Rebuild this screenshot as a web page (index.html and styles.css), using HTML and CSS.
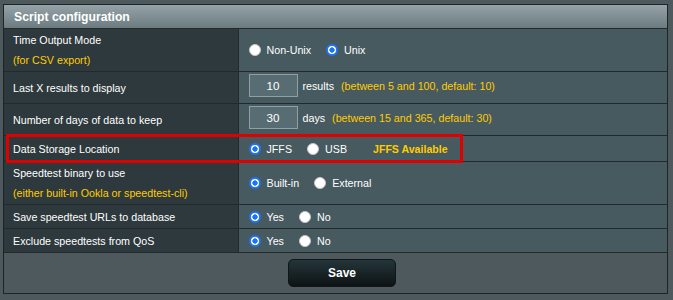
FILE: index.html
```html
<!DOCTYPE html>
<html>
<head>
<meta charset="utf-8">
<link rel="stylesheet" href="styles.css">
</head>
<body>
<div class="panel">
  <table class="form">
    <colgroup><col class="c1"><col></colgroup>
    <thead>
      <tr class="head"><td colspan="2">Script configuration</td></tr>
    </thead>
    <tbody>
      <tr class="two">
        <th>Time Output Mode<br><span class="hint">(for CSV export)</span></th>
        <td><div class="opts">
          <input type="radio" class="radio" name="t"><span class="lbl">Non-Unix</span>
          <input type="radio" class="radio" name="t" checked><span class="lbl">Unix</span>
        </div></td>
      </tr>
      <tr class="inp">
        <th>Last X results to display</th>
        <td><div class="opts">
          <input type="text" class="num" value="10"><span>results</span><span class="hint gap">(between 5 and 100, default: 10)</span>
        </div></td>
      </tr>
      <tr class="inp">
        <th>Number of days of data to keep</th>
        <td><div class="opts">
          <input type="text" class="num" value="30"><span>days</span><span class="hint gap">(between 15 and 365, default: 30)</span>
        </div></td>
      </tr>
      <tr class="one storage">
        <th>Data Storage Location</th>
        <td><div class="opts">
          <input type="radio" class="radio" name="s" checked><span class="lbl">JFFS</span>
          <input type="radio" class="radio" name="s"><span class="lbl">USB</span>
          <span class="hint bold avail">JFFS Available</span>
        </div></td>
      </tr>
      <tr class="two">
        <th>Speedtest binary to use<br><span class="hint">(either built-in Ookla or speedtest-cli)</span></th>
        <td><div class="opts">
          <input type="radio" class="radio" name="b" checked><span class="lbl">Built-in</span>
          <input type="radio" class="radio" name="b"><span class="lbl">External</span>
        </div></td>
      </tr>
      <tr class="one">
        <th>Save speedtest URLs to database</th>
        <td><div class="opts">
          <input type="radio" class="radio" name="u" checked><span class="lbl">Yes</span>
          <input type="radio" class="radio" name="u"><span class="lbl">No</span>
        </div></td>
      </tr>
      <tr class="one">
        <th>Exclude speedtests from QoS</th>
        <td><div class="opts">
          <input type="radio" class="radio" name="q" checked><span class="lbl">Yes</span>
          <input type="radio" class="radio" name="q"><span class="lbl">No</span>
        </div></td>
      </tr>
    </tbody>
  </table>
  <div class="apply"><button class="save">Save</button></div>
  <div class="mark"></div>
</div>
</body>
</html>
```
FILE: styles.css
```css
body {
  margin: 0;
  background: #4d595d;
  font-family: "Liberation Sans", Arial, sans-serif;
  color: #fff;
}
.panel {
  position: relative;
  margin: 4px 5px 5px 3px;
  border: 1px solid #1c2426;
  background: #4d595d;
}
.form {
  width: 100%;
  border-collapse: collapse;
  border-style: hidden;
  table-layout: fixed;
}
.form col.c1 { width: 234px; }
.form th, .form td {
  border: 1px solid #222a2c;
}
.form th {
  background: #2e393d;
  font-weight: normal;
  text-align: left;
  font-size: 10.7px;
  line-height: 20px;
  padding: 1px 9px 1px;
  color: #fff;
}
.form td {
  background: #475a5f;
  font-size: 10.7px;
  padding: 1px 10px;
}
.form .head td {
  background: linear-gradient(#95a3a8, #6c7b80);
  font-weight: bold;
  font-size: 12.2px;
  line-height: 16px;
  padding: 4px 10px 3px;
  color: #fff;
}
.form tr.one th { padding: 2px 9px 1px; }
.form tr.storage th { padding: 3px 9px 2px; }
.form tr.inp td { padding: 2px 10px 6px; }
.opts {
  display: flex;
  align-items: center;
  min-height: 20px;
  white-space: nowrap;
}
.hint { color: #ffcc00; }
.bold { font-weight: bold; font-size: 10.6px; }
.gap { margin-left: 7px; }
.avail { margin-left: 11px; }
.radio {
  appearance: none;
  -webkit-appearance: none;
  width: 12px;
  height: 12px;
  margin: 0;
  border-radius: 50%;
  background: #fff;
  border: 1px solid #c8c8c8;
  box-sizing: border-box;
  flex: none;
}
.radio:checked {
  border: 2px solid #1c74fb;
  background: radial-gradient(circle, #1c74fb 0 2.4px, #fff 2.9px);
}
.lbl {
  margin-left: 6px;
  margin-right: 15px;
}
.num {
  width: 49px;
  height: 23px;
  box-sizing: border-box;
  margin: 0 5px 0 0;
  padding: 0;
  background: #576d73;
  border: 1px solid #929ea1;
  color: #fff;
  text-align: center;
  font-family: "Liberation Sans", Arial, sans-serif;
  font-size: 11.6px;
}
.apply {
  border-top: 1px solid #222a2c;
  padding: 6px 0 6px 13px;
  text-align: center;
}
.save {
  width: 108px;
  height: 28px;
  border-radius: 5px;
  background: linear-gradient(#243539, #0e1315);
  border: 1px solid #101618;
  color: #fff;
  font-family: "Liberation Sans", Arial, sans-serif;
  font-weight: bold;
  font-size: 12px;
  display: inline-block;
  vertical-align: top;
}
.mark {
  position: absolute;
  left: 2px;
  top: 129px;
  width: 457px;
  height: 29px;
  box-sizing: border-box;
  border: 3px solid #e00000;
  pointer-events: none;
}
```
